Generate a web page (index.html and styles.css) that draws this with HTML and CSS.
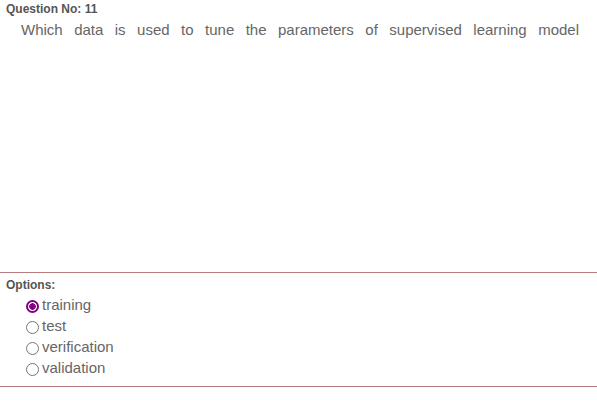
FILE: index.html
```html
<!DOCTYPE html>
<html>
<head>
<meta charset="utf-8">
<link rel="stylesheet" href="styles.css">
</head>
<body>
<div class="page">
  <div class="qno">Question No: 11</div>
  <div class="qtext">Which data is used to tune the parameters of supervised learning model</div>
  <div class="spacer"></div>
  <div class="options">
    <div class="olabel">Options:</div>
    <ul class="olist">
      <li class="opt"><span class="radio checked"></span><span class="otext">training</span></li>
      <li class="opt"><span class="radio"></span><span class="otext">test</span></li>
      <li class="opt"><span class="radio"></span><span class="otext">verification</span></li>
      <li class="opt"><span class="radio"></span><span class="otext">validation</span></li>
    </ul>
  </div>
</div>
</body>
</html>
```
FILE: styles.css
```css
html, body {
  margin: 0;
  padding: 0;
  background: #ffffff;
}
.page {
  font-family: "Liberation Sans", Arial, sans-serif;
  color: #666666;
  display: flex;
  flex-direction: column;
  width: 597px;
}
.qno {
  font-size: 12px;
  font-weight: bold;
  color: #555555;
  padding: 2px 0 0 6px;
  line-height: 14px;
}
.qtext {
  font-size: 15px;
  line-height: 18px;
  color: #666666;
  margin: 5px 18px 0 21px;
  text-align: justify;
  text-align-last: justify;
}
.spacer {
  height: 233px;
}
.options {
  border-top: 1px solid #b87a7a;
  border-bottom: 1px solid #b87a7a;
  padding: 5px 0 8px 0;
}
.olabel {
  font-size: 12px;
  font-weight: bold;
  color: #555555;
  padding-left: 6px;
  line-height: 14px;
}
.olist {
  list-style: none;
  margin: 2px 0 0 0;
  padding: 0 0 0 26px;
}
.opt {
  display: flex;
  align-items: center;
  height: 21px;
}
.radio {
  width: 13px;
  height: 13px;
  border: 1px solid #767676;
  border-radius: 50%;
  box-sizing: border-box;
  margin-right: 3px;
  margin-top: 3px;
  flex: none;
}
.radio.checked {
  border: 2px solid #800080;
  background: radial-gradient(circle, #800080 0 3px, #ffffff 3.5px);
}
.otext {
  font-size: 15px;
  color: #666666;
}
```
